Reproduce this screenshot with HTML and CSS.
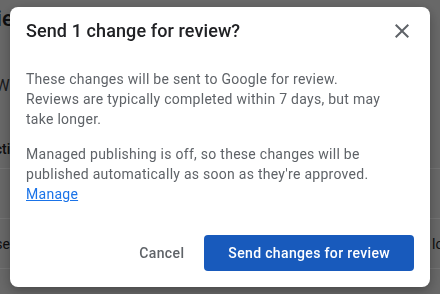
FILE: index.html
```html
<!DOCTYPE html>
<html lang="en">
  <head>
    <meta charset="UTF-8" />
    <meta name="viewport" content="width=device-width, initial-scale=1.0" />
    <title>Publishing overview</title>
    <link rel="stylesheet" href="styles.css">
  </head>
  <body>
    <div class="page">
      <h1 class="edge"><span>Publishing overview</span></h1>
      <p class="intro edge"><span>Why</span></p>
      <div class="table">
        <div class="row head"><span class="cell-l">Action</span><span></span><span class="cell-r"></span></div>
        <div class="row"><span class="cell-l"></span><span></span><span class="cell-r"></span></div>
        <div class="row"><span class="cell-l">Release</span><span></span><span class="cell-r">locale</span></div>
      </div>
    </div>

    <div class="scrim">
      <div class="dialog" role="dialog">
        <div class="dialog-head">
          <h2>Send 1 change for review?</h2>
          <button class="close" aria-label="Close">
            <svg width="24" height="24" viewBox="0 0 24 24">
              <path d="M19 6.41 17.59 5 12 10.59 6.41 5 5 6.41 10.59 12 5 17.59 6.41 19 12 13.41 17.59 19 19 17.59 13.41 12z" fill="#5f6368"/>
            </svg>
          </button>
        </div>
        <div class="dialog-body">
          <p>These changes will be sent to Google for review. Reviews are typically completed within 7 days, but may take longer.</p>
          <p>Managed publishing is off, so these changes will be published automatically as soon as they're approved. <a href="#">Manage</a></p>
        </div>
        <div class="dialog-actions">
          <button class="btn text">Cancel</button>
          <button class="btn primary">Send changes for review</button>
        </div>
      </div>
    </div>
  </body>
</html>
```

FILE: styles.css
```css
* {
  margin: 0;
  padding: 0;
  box-sizing: border-box;
}
body {
  width: 440px;
  height: 294px;
  overflow: hidden;
  font-family: Roboto, "Liberation Sans", sans-serif;
  background: #e6e6e6;
  color: #202124;
}

/* page behind the dialog */
.page {
  height: 294px;
  overflow: hidden;
  padding-top: 4px;
}
.edge {
  display: flex;
  justify-content: flex-end;
  white-space: nowrap;
}
.page h1 {
  width: 30px;
  font-size: 22px;
  font-weight: 500;
  line-height: 30px;
}
.page .intro {
  width: 26px;
  margin-top: 40px;
  font-size: 16px;
  line-height: 24px;
  color: #3c4043;
}
.table {
  margin-top: 41px;
}
.row {
  display: grid;
  grid-template-columns: 10px 1fr 8px;
  height: 50px;
  align-items: center;
  border-bottom: 1px solid #fff;
  font-size: 14px;
  line-height: 20px;
  white-space: nowrap;
}
.row.head {
  height: 30px;
  align-items: start;
  font-weight: 500;
}
.cell-l {
  display: flex;
  justify-content: flex-end;
}
.head .cell-l {
  margin-right: -16px;
}

/* dialog */
.scrim {
  position: fixed;
  inset: 0;
  background: rgba(0, 0, 0, 0.55);
  display: flex;
  align-items: center;
  justify-content: center;
}
.dialog {
  width: 420px;
  height: 280px;
  background: #fff;
  border-radius: 8px;
  box-shadow: 0 4px 12px rgba(0, 0, 0, 0.3);
  padding: 12px 16px 16px 16px;
  display: flex;
  flex-direction: column;
}
.dialog-head {
  display: flex;
  justify-content: space-between;
  align-items: center;
}
.dialog-head h2 {
  font-size: 18px;
  font-weight: 500;
  line-height: 24px;
  letter-spacing: 0.1px;
  color: #202124;
}
.close {
  border: none;
  background: none;
  width: 24px;
  height: 24px;
}
.dialog-body {
  margin-top: 26px;
  max-width: 358px;
  font-size: 14px;
  line-height: 20px;
  letter-spacing: 0.27px;
  color: #5f6368;
}
.dialog-body p + p {
  margin-top: 15px;
}
.dialog-body a {
  color: #1a73e8;
}
.dialog-actions {
  margin-top: auto;
  display: flex;
  justify-content: flex-end;
  gap: 8px;
}
.btn {
  font-family: Roboto, "Liberation Sans", sans-serif;
  font-size: 14px;
  font-weight: 500;
  letter-spacing: 0.35px;
  height: 36px;
  padding: 0 24px;
  border-radius: 4px;
  border: none;
  cursor: pointer;
}
.btn.text {
  background: none;
  color: #5f6368;
  padding: 0 12px;
}
.btn.primary {
  background: #185abc;
  color: #fff;
}
```
